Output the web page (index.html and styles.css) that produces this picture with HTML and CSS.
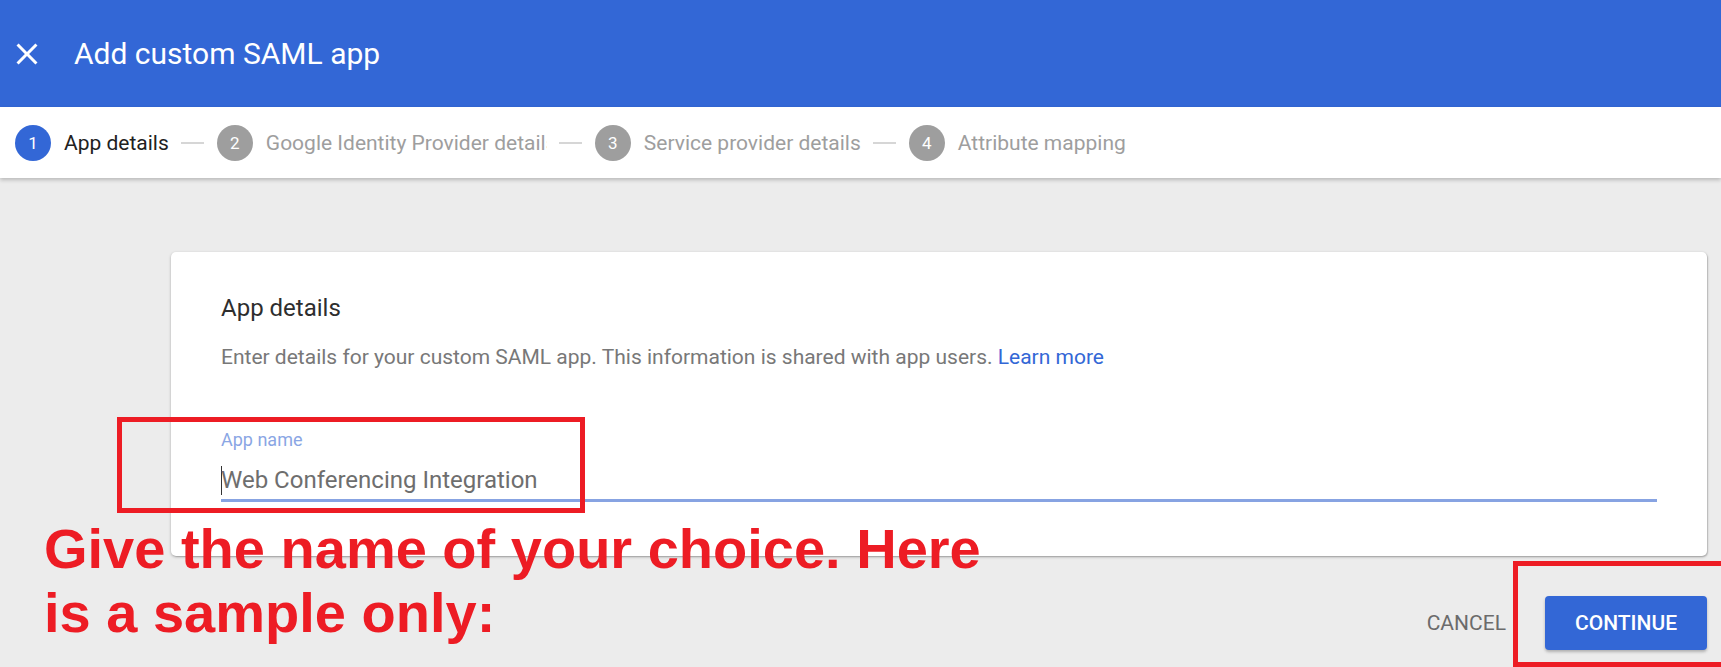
FILE: index.html
```html
<!DOCTYPE html>
<html lang="en">
<head>
<meta charset="utf-8">
<title>Add custom SAML app</title>
<link rel="stylesheet" href="styles.css">
</head>
<body>
<header class="appbar">
  <svg class="close-icon" viewBox="0 0 24 24" width="36" height="36" aria-hidden="true"><path fill="#fff" d="M19 6.41L17.59 5 12 10.59 6.41 5 5 6.41 10.59 12 5 17.59 6.41 19 12 13.41 17.59 19 19 17.59 13.41 12z"/></svg>
  <h1 class="appbar-title">Add custom SAML app</h1>
</header>
<nav class="stepper">
  <div class="step step-active"><span class="step-num">1</span><span class="step-label">App details</span></div>
  <span class="step-line"></span>
  <div class="step"><span class="step-num">2</span><span class="step-label step-label-clip">Google Identity Provider details</span></div>
  <span class="step-line"></span>
  <div class="step"><span class="step-num">3</span><span class="step-label">Service provider details</span></div>
  <span class="step-line"></span>
  <div class="step"><span class="step-num">4</span><span class="step-label">Attribute mapping</span></div>
</nav>
<main class="content">
  <section class="card">
    <h2 class="card-title">App details</h2>
    <p class="card-desc">Enter details for your custom SAML app. This information is shared with app users. <a class="link" href="#">Learn more</a></p>
    <div class="field">
      <div class="field-label">App name</div>
      <div class="field-value"><span class="caret"></span>Web Conferencing Integration</div>
    </div>
  </section>
  <div class="actions">
    <button class="btn btn-text">CANCEL</button>
    <button class="btn btn-primary">CONTINUE</button>
  </div>
</main>
<div class="note-box note-box-name"></div>
<div class="note-box note-box-continue"></div>
<p class="note-text">Give the name of your choice. Here<br>is a sample only:</p>
</body>
</html>
```

FILE: styles.css
```css
html, body {
  margin: 0;
  padding: 0;
}
body {
  position: relative;
  width: 1721px;
  height: 667px;
  overflow: hidden;
  background: #ececec;
  font-family: Roboto, "Noto Sans", sans-serif;
}
.appbar {
  height: 107px;
  background: #3367d6;
  display: flex;
  align-items: center;
  padding-left: 9px;
  box-sizing: border-box;
}
.close-icon {
  display: block;
  flex: none;
  margin-right: 29px;
}
.appbar-title {
  margin: 0;
  color: #fff;
  font-size: 30px;
  font-weight: 400;
  line-height: 40px;
}
.stepper {
  position: relative;
  height: 71px;
  background: #fff;
  display: flex;
  align-items: center;
  padding-left: 15px;
  box-shadow: 0 2px 4px rgba(0, 0, 0, 0.22);
}
.step {
  display: flex;
  align-items: center;
}
.step-num {
  width: 36px;
  height: 36px;
  border-radius: 50%;
  background: #9e9e9e;
  color: #fff;
  font-size: 17px;
  line-height: 36px;
  text-align: center;
  flex: none;
  margin-right: 13px;
}
.step-active .step-num {
  background: #3367d6;
}
.step-label {
  font-size: 21px;
  line-height: 30px;
  color: #9e9e9e;
  white-space: nowrap;
}
.step-active .step-label {
  color: #212121;
}
.step-label-clip {
  display: block;
  max-width: 281px;
  overflow: hidden;
}
.step-line {
  width: 23px;
  height: 2px;
  background: #d6d6d6;
  margin: 0 13px 0 12px;
  flex: none;
}
.content {
  padding: 74px 14px 0 171px;
}
.card {
  background: #fff;
  border-radius: 5px;
  padding: 40px 50px 54px;
  box-shadow: 0 1px 3px rgba(0, 0, 0, 0.28), 1px 1px 1px rgba(0, 0, 0, 0.12);
}
.card-title {
  margin: 0;
  font-size: 24px;
  font-weight: 400;
  line-height: 32px;
  color: #2e2e2e;
}
.card-desc {
  margin: 18px 0 0;
  font-size: 21px;
  line-height: 30px;
  color: #787878;
}
.link {
  color: #3367d6;
  text-decoration: none;
}
.field {
  margin-top: 56px;
}
.field-label {
  font-size: 18px;
  line-height: 24px;
  color: #8aa6e4;
}
.field-value {
  margin-top: 12px;
  font-size: 24px;
  line-height: 32px;
  color: #6e6e6e;
  padding-bottom: 3px;
  border-bottom: 3px solid #87a3e2;
  display: flex;
  align-items: center;
}
.caret {
  width: 1px;
  height: 29px;
  background: #333;
  margin-right: -1px;
}
.actions {
  display: flex;
  justify-content: flex-end;
  gap: 9px;
  margin-top: 40px;
}
.btn {
  height: 54px;
  padding: 0 30px;
  border: none;
  border-radius: 4px;
  font-family: Roboto, "Noto Sans", sans-serif;
  font-size: 21px;
  font-weight: 500;
  cursor: pointer;
}
.btn-text {
  background: transparent;
  color: #6b6b6b;
  font-weight: 400;
}
.btn-primary {
  background: #3367d6;
  color: #fff;
  box-shadow: 0 2px 3px rgba(0, 0, 0, 0.25);
}
.note-box {
  position: absolute;
  box-sizing: border-box;
  border: 5px solid #ed1c24;
}
.note-box-name {
  left: 117px;
  top: 417px;
  width: 468px;
  height: 96px;
}
.note-box-continue {
  left: 1513px;
  top: 561px;
  width: 230px;
  height: 106px;
}
.note-text {
  position: absolute;
  left: 44px;
  top: 517px;
  margin: 0;
  font-family: "Liberation Sans", Arial, sans-serif;
  font-weight: 700;
  font-size: 56px;
  line-height: 64px;
  color: #ed1c24;
}
```
